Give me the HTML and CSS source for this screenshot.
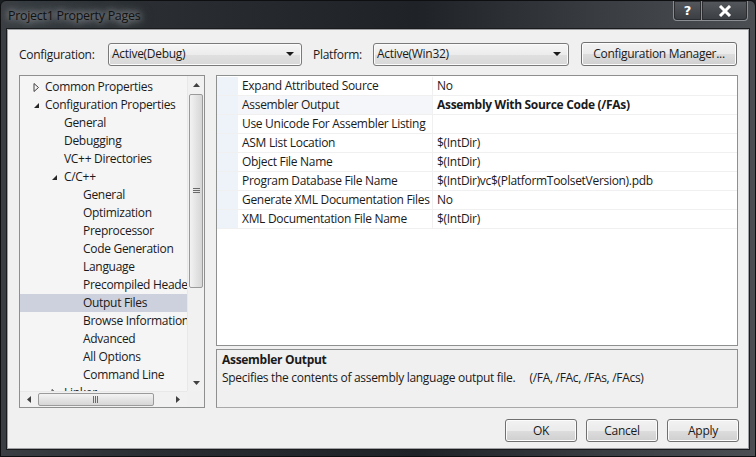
FILE: index.html
```html
<!DOCTYPE html>
<html>
<head>
<meta charset="utf-8">
<link rel="stylesheet" href="styles.css">
</head>
<body>
<div class="window">
  <div class="titlebar">
    <span class="title">Project1 Property Pages</span>
    <div class="caption-btns">
      <div class="cap help">?</div>
      <div class="cap close">
        <svg width="14" height="12" viewBox="0 0 14 12"><path d="M2 1 L12 11 M12 1 L2 11" stroke="#fff" stroke-width="3" fill="none"/></svg>
      </div>
    </div>
  </div>
  <div class="client">
    <div class="toprow">
      <span class="lbl cfg-lbl">Configuration:</span>
      <div class="combo cfg-combo"><span>Active(Debug)</span><i class="arrow"></i></div>
      <span class="lbl plat-lbl">Platform:</span>
      <div class="combo plat-combo"><span>Active(Win32)</span><i class="arrow"></i></div>
      <div class="btn cfgmgr">Configuration Manager...</div>
    </div>
    <div class="main">
      <div class="tree">
        <div class="tree-list">
          <div class="node l1"><svg class="exp" width="9" height="9" viewBox="0 0 9 9"><path d="M2 0.5 L6.5 4.5 L2 8.5 Z" fill="none" stroke="#404040"/></svg>Common Properties</div>
          <div class="node l1"><svg class="exp" width="9" height="9" viewBox="0 0 9 9"><path d="M7 2 L7 7 L2 7 Z" fill="#262626"/></svg>Configuration Properties</div>
          <div class="node l2">General</div>
          <div class="node l2">Debugging</div>
          <div class="node l2">VC++ Directories</div>
          <div class="node l2x"><svg class="exp" width="9" height="9" viewBox="0 0 9 9"><path d="M7 2 L7 7 L2 7 Z" fill="#262626"/></svg>C/C++</div>
          <div class="node l3">General</div>
          <div class="node l3">Optimization</div>
          <div class="node l3">Preprocessor</div>
          <div class="node l3">Code Generation</div>
          <div class="node l3">Language</div>
          <div class="node l3">Precompiled Headers</div>
          <div class="node l3 sel">Output Files</div>
          <div class="node l3">Browse Information</div>
          <div class="node l3">Advanced</div>
          <div class="node l3">All Options</div>
          <div class="node l3">Command Line</div>
          <div class="node l2x"><svg class="exp" width="9" height="9" viewBox="0 0 9 9"><path d="M2 0.5 L6.5 4.5 L2 8.5 Z" fill="none" stroke="#404040"/></svg>Linker</div>
        </div>
        <div class="vscroll">
          <div class="sarrow"><svg width="7" height="4" viewBox="0 0 7 4"><path d="M0 4 L3.5 0 L7 4 Z" fill="#404040"/></svg></div>
          <div class="vthumb"><svg width="7" height="6" viewBox="0 0 7 6"><path d="M0 0.5 H7 M0 2.5 H7 M0 4.5 H7" stroke="#6a6a6a"/></svg></div>
          <div class="vspace"></div>
          <div class="sarrow"><svg width="7" height="4" viewBox="0 0 7 4"><path d="M0 0 L3.5 4 L7 0 Z" fill="#404040"/></svg></div>
        </div>
        <div class="hscroll">
          <div class="harrow"><svg width="4" height="7" viewBox="0 0 4 7"><path d="M4 0 L0 3.5 L4 7 Z" fill="#404040"/></svg></div>
          <div class="hthumb"><svg width="6" height="7" viewBox="0 0 6 7"><path d="M0.5 0 V7 M2.5 0 V7 M4.5 0 V7" stroke="#6a6a6a"/></svg></div>
          <div class="hspace"></div>
          <div class="harrow"><svg width="4" height="7" viewBox="0 0 4 7"><path d="M0 0 L4 3.5 L0 7 Z" fill="#404040"/></svg></div>
        </div>
        <div class="corner"></div>
      </div>
      <div class="right">
        <div class="grid">
          <div class="prow"><div class="margin"></div><div class="pname">Expand Attributed Source</div><div class="pval">No</div></div>
          <div class="prow"><div class="margin"></div><div class="pname cur">Assembler Output</div><div class="pval bold">Assembly With Source Code (/FAs)</div></div>
          <div class="prow"><div class="margin"></div><div class="pname">Use Unicode For Assembler Listing</div><div class="pval"></div></div>
          <div class="prow"><div class="margin"></div><div class="pname">ASM List Location</div><div class="pval">$(IntDir)</div></div>
          <div class="prow"><div class="margin"></div><div class="pname">Object File Name</div><div class="pval">$(IntDir)</div></div>
          <div class="prow"><div class="margin"></div><div class="pname">Program Database File Name</div><div class="pval">$(IntDir)vc$(PlatformToolsetVersion).pdb</div></div>
          <div class="prow"><div class="margin"></div><div class="pname">Generate XML Documentation Files</div><div class="pval">No</div></div>
          <div class="prow"><div class="margin"></div><div class="pname">XML Documentation File Name</div><div class="pval">$(IntDir)</div></div>
        </div>
        <div class="desc">
          <div class="desc-title">Assembler Output</div>
          <div class="desc-text">Specifies the contents of assembly language output file.&nbsp;&nbsp;&nbsp;&nbsp;&nbsp;(/FA, /FAc, /FAs, /FAcs)</div>
        </div>
      </div>
    </div>
    <div class="btnrow">
      <div class="btn dlg">OK</div>
      <div class="btn dlg">Cancel</div>
      <div class="btn dlg">Apply</div>
    </div>
  </div>
</div>
</body>
</html>
```
FILE: styles.css
```css
* { box-sizing: border-box; }
html, body { margin: 0; padding: 0; }
body {
  width: 756px; height: 457px; overflow: hidden;
  background: #1c1e21;
  font-family: "Open Sans", "Noto Sans", sans-serif;
  font-size: 12px;
  letter-spacing: -0.3px;
  color: #1a1a1a;
}
.window {
  width: 756px; height: 457px;
  display: flex; flex-direction: column;
  background: linear-gradient(90deg, #3b3e43 0%, #2a2d31 20%, #1f2226 55%, #3a3d42 80%, #4b4e53 100%);
  border: 1px solid #0e0f11;
  border-radius: 6px 6px 0 0;
}
.titlebar {
  height: 28px;
  display: flex; align-items: flex-start;
  padding-left: 7px;
}
.title {
  margin-top: 6px;
  font-size: 12.5px;
  color: #111;
  text-shadow: 0 0 6px #9ea2a8, 0 0 10px #8d9197, 0 0 14px #7f8389;
}
.caption-btns {
  margin-left: auto;
  margin-right: 7px;
  display: flex;
}
.cap {
  height: 20px;
  border: 1px solid #8a8d92;
  border-top: none;
  background: linear-gradient(#55585d, #3a3d42);
  color: #fff; font-weight: bold; font-family: "DejaVu Sans", sans-serif;
  display: flex; align-items: center; justify-content: center;
  box-shadow: inset 0 0 0 1px #2a2c30;
  letter-spacing: 0;
}
.cap.help { width: 29px; border-radius: 0 0 0 4px; font-size: 13px; }
.cap.close { width: 46px; border-left: none; border-radius: 0 0 4px 0; }
.client {
  flex: 1;
  margin: 0 6px 7px 6px;
  background: #f0f0f0;
  border: 1px solid #9ea0a4;
  box-shadow: 0 0 0 1px #1a1b1d;
  display: flex; flex-direction: column;
  padding: 12px 8px 0 11px;
}
.toprow {
  display: flex; align-items: center;
  height: 24px;
}
.lbl { white-space: nowrap; }
.cfg-lbl { width: 89px; }
.plat-lbl { margin-left: 11px; width: 60px; }
.combo {
  height: 23px;
  border: 1px solid #7a7a7a;
  border-radius: 3px;
  background: linear-gradient(#f6f6f6 0%, #ececec 50%, #e0e0e0 51%, #d8d8d8 100%);
  display: flex; align-items: center;
  padding: 0 0 1px 3px;
  box-shadow: inset 0 0 0 1px #fbfbfb;
}
.combo span { flex: 1; }
.cfg-combo { width: 194px; }
.plat-combo { width: 196px; }
.arrow {
  width: 0; height: 0;
  border-left: 4px solid transparent; border-right: 4px solid transparent;
  border-top: 4px solid #1a1a1a;
  margin-right: 7px;
}
.btn {
  height: 24px;
  border: 1px solid #707070;
  border-radius: 3px;
  background: linear-gradient(#f2f2f2 0%, #ebebeb 50%, #dddddd 51%, #cfcfcf 100%);
  box-shadow: inset 0 0 0 1px #fcfcfc;
  display: flex; align-items: center; justify-content: center;
  padding-bottom: 1px;
}
.cfgmgr { margin-left: 12px; width: 156px; }
.main {
  margin-top: 9px;
  display: flex;
  height: 333px;
}
.tree {
  width: 186px;
  border: 1px solid #8e8f8f;
  background: #f5f5f5;
  display: grid;
  grid-template-columns: 1fr 17px;
  grid-template-rows: 1fr 16px;
}
.tree-list { overflow: hidden; padding-top: 2px; }
.node {
  height: 18px; line-height: 18px; white-space: nowrap;
  display: flex; align-items: center;
}
.node.l1 { padding-left: 12px; }
.node.l2 { padding-left: 44px; }
.node.l2x { padding-left: 30px; }
.node.l3 { padding-left: 63px; }
.exp { margin-right: 4px; flex: none; }
.node.l2x .exp { margin-right: 5px; }
.node.sel { background: #cdd0dd; }
.vscroll {
  display: flex; flex-direction: column;
  background: #f1f1f1;
  border-left: 1px solid #e8e8e8;
}
.sarrow { height: 17px; display: flex; align-items: center; justify-content: center; }
.vthumb {
  height: 194px;
  margin: 1px 1px 0 1px;
  border: 1px solid #9a9a9a;
  border-radius: 2px;
  background: linear-gradient(90deg, #f3f3f3, #e4e4e4 50%, #d6d6d6);
  display: flex; align-items: center; justify-content: center;
}
.vspace { flex: 1; }
.hscroll {
  display: flex; align-items: stretch;
  background: #f1f1f1;
  border-top: 1px solid #e8e8e8;
}
.harrow { width: 18px; display: flex; align-items: center; justify-content: center; }
.hthumb {
  width: 116px;
  margin: 1px 0;
  border: 1px solid #9a9a9a;
  border-radius: 2px;
  background: linear-gradient(#f3f3f3, #e4e4e4 50%, #d6d6d6);
  display: flex; align-items: center; justify-content: center;
}
.hspace { flex: 1; }
.corner { background: #f0f0f0; }
.right {
  margin-left: 11px;
  width: 522px;
  display: flex; flex-direction: column;
}
.grid {
  height: 271px;
  background: #fff;
  border: 1px solid #8e8f8f;
  padding-top: 1px;
}
.prow {
  display: flex; height: 19px; line-height: 18px;
  border-bottom: 1px solid #f0f0f0;
  white-space: nowrap;
}
.margin { width: 21px; background: #eef3fa; flex: none; }
.pname {
  width: 195px; flex: none;
  padding-left: 4px;
  border-right: 1px solid #f0f0f0;
  overflow: hidden;
}
.pname.cur { background: #f4f6f9; }
.pval { padding-left: 4px; flex: 1; }
.pval.bold { font-weight: bold; }
.desc {
  margin-top: 3px;
  height: 59px;
  border: 1px solid #8e8f8f;
  border-bottom-color: #a8a8a8;
  background: #f0f0f0;
  padding: 1px 5px;
  line-height: 18px;
}
.desc-title { font-weight: bold; }
.desc-text { white-space: pre-wrap; }
.btnrow {
  margin-top: 11px;
  display: flex; justify-content: flex-end;
  gap: 9px;
  padding-right: 1px;
}
.btn.dlg { width: 72px; height: 23px; }
```
